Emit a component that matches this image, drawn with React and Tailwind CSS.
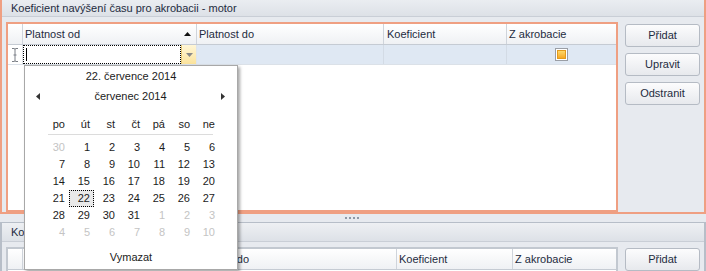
import React from "react";

const ORANGE = "border-[#ef9f82]";

function Btn({ children }) {
  return (
    <div className="h-[23px] rounded-[3px] border border-[#b5bbc4] bg-gradient-to-b from-[#fcfcfd] to-[#e7e9ed] flex items-center justify-center text-[#1e2b40]">
      {children}
    </div>
  );
}

function SortUp() {
  return (
    <svg width="7" height="4" viewBox="0 0 7 4" className="block">
      <path d="M0 4 L3.5 0 L7 4 Z" fill="#111" />
    </svg>
  );
}

function IBeam() {
  return (
    <svg width="8" height="14" viewBox="0 0 8 14" className="block">
      <path
        d="M1 0.5 H3 Q4 0.5 4 1.5 Q4 0.5 5 0.5 H7 M4 1.5 V12.5 M1 13.5 H3 Q4 13.5 4 12.5 Q4 13.5 5 13.5 H7 M2.5 7 H5.5"
        stroke="#7b7f86"
        strokeWidth="1"
        fill="none"
      />
    </svg>
  );
}

function Checkbox() {
  return (
    <div className="w-[13px] h-[13px] border border-[#9a9ea5] bg-white p-px">
      <div className="w-full h-full border border-[#e39a1c] bg-gradient-to-b from-[#fdd866] to-[#f6a81e]" />
    </div>
  );
}

function TopPanel() {
  return (
    <div className={`h-[214px] flex flex-col border-x-2 border-b-2 ${ORANGE} bg-[#e7eaef]`}>
      <div className="h-[17px] shrink-0 flex items-center pl-[9px] border-b border-[#c9ced6] bg-gradient-to-b from-[#eaedf1] to-[#dde1e7] text-[#1e2b40]">
        Koeficient navýšení času pro akrobacii - motor
      </div>
      <div className="flex pt-[5px] pl-[4px]">
        <div className={`w-[612px] h-[190px] border-2 ${ORANGE} bg-white flex flex-col`}>
          <div className="h-[21px] flex border-b border-[#c5cbd3] bg-gradient-to-b from-white to-[#eff1f4] text-[#1e2b40]">
            <div className="w-[15px] border-r border-[#cfd4db]" />
            <div className="w-[174px] border-r border-[#cfd4db] flex items-center pl-[2px] pr-[5px] justify-between">
              <span>Platnost od</span>
              <SortUp />
            </div>
            <div className="w-[187px] border-r border-[#cfd4db] flex items-center pl-[2px]">Platnost do</div>
            <div className="w-[123px] border-r border-[#cfd4db] flex items-center pl-[3px]">Koeficient</div>
            <div className="flex-1 flex items-center pl-[2px]">Z akrobacie</div>
          </div>
          <div className="h-[20px] flex border-b border-[#dbe1e8]">
            <div className="w-[15px] border-r border-[#e1e5ea] flex items-center justify-center bg-white">
              <IBeam />
            </div>
            <div className="w-[174px] border-r border-[#dfe4ea] flex bg-white">
              <div className="flex-1 border border-dotted border-black flex items-center pl-[2px]">
                <div className="w-px h-[13px] bg-black" />
              </div>
              <div className="w-[15px] border-l border-[#e6c873] bg-gradient-to-b from-[#fff6d6] to-[#fbe39c] flex items-center justify-center">
                <svg width="7" height="4" viewBox="0 0 7 4" className="block">
                  <path d="M0 0 L7 0 L3.5 4 Z" fill="#8a8a8a" />
                </svg>
              </div>
            </div>
            <div className="w-[187px] border-r border-[#d3dbe5] bg-[#dfe8f3]" />
            <div className="w-[123px] border-r border-[#d3dbe5] bg-[#dfe8f3]" />
            <div className="flex-1 bg-[#dfe8f3] flex items-center justify-center">
              <Checkbox />
            </div>
          </div>
        </div>
        <div className="ml-[7px] mt-[2px] w-[75px] flex flex-col gap-[6px]">
          <Btn>Přidat</Btn>
          <Btn>Upravit</Btn>
          <Btn>Odstranit</Btn>
        </div>
      </div>
    </div>
  );
}

function Splitter() {
  return (
    <div className="h-[8px] flex items-center justify-center gap-[2px] pr-[3px]">
      <div className="w-[2px] h-[2px] bg-[#8e98a6]" />
      <div className="w-[2px] h-[2px] bg-[#8e98a6]" />
      <div className="w-[2px] h-[2px] bg-[#8e98a6]" />
      <div className="w-[2px] h-[2px] bg-[#8e98a6]" />
    </div>
  );
}

function BottomPanel() {
  return (
    <div className="h-[60px] flex flex-col border-t border-x-2 border-[#b7bec8] bg-[#e7eaef]">
      <div className="h-[19px] shrink-0 flex items-center pl-[9px] border-b border-[#c9ced6] bg-gradient-to-b from-[#eef0f3] to-[#dde1e7] text-[#1e2b40]">
        Koeficient navýšení času
      </div>
      <div className="flex pt-[5px] pl-[4px]">
        <div className="w-[612px] h-[40px] border-2 border-[#c2c8d0] bg-white flex flex-col">
          <div className="h-[21px] flex border-b border-[#c5cbd3] bg-gradient-to-b from-white to-[#eff1f4] text-[#1e2b40]">
            <div className="w-[15px] border-r border-[#cfd4db]" />
            <div className="w-[169px] border-r border-[#cfd4db] flex items-center pl-[2px]">Platnost od</div>
            <div className="w-[205px] border-r border-[#cfd4db] flex items-center pl-[2px]">Platnost do</div>
            <div className="w-[116px] border-r border-[#cfd4db] flex items-center pl-[2px]">Koeficient</div>
            <div className="flex-1 flex items-center pl-[2px]">Z akrobacie</div>
          </div>
        </div>
        <div className="ml-[7px] mt-[1px] w-[75px] flex flex-col">
          <Btn>Přidat</Btn>
        </div>
      </div>
    </div>
  );
}

const HEAD = ["po", "út", "st", "čt", "pá", "so", "ne"];
const ROWS = [
  [[30, 1], [1], [2], [3], [4], [5], [6]],
  [[7], [8], [9], [10], [11], [12], [13]],
  [[14], [15], [16], [17], [18], [19], [20]],
  [[21], [22, 0, 1], [23], [24], [25], [26], [27]],
  [[28], [29], [30], [31], [1, 1], [2, 1], [3, 1]],
  [[4, 1], [5, 1], [6, 1], [7, 1], [8, 1], [9, 1], [10, 1]],
];

function Calendar() {
  return (
    <div className="absolute left-[24px] top-[65px] w-[214px] h-[205px] border border-[#a8a8a8] bg-white shadow-[2px_2px_3px_rgba(0,0,0,0.35)] flex flex-col items-center pt-[3px] text-[#1c1c1c]">
      <div className="h-[14px] leading-[14px]">22. července 2014</div>
      <div className="mt-[6px] h-[14px] w-full flex items-center justify-between pl-[11px] pr-[12px]">
        <svg width="4" height="7" viewBox="0 0 4 7" className="block">
          <path d="M4 0 L0 3.5 L4 7 Z" fill="#333" />
        </svg>
        <span className="leading-[14px]">červenec 2014</span>
        <svg width="4" height="7" viewBox="0 0 4 7" className="block">
          <path d="M0 0 L4 3.5 L0 7 Z" fill="#333" />
        </svg>
      </div>
      <div className="mt-[13px] ml-[19px] self-start w-[175px]">
        <div className="grid grid-cols-7 h-[17px]">
          {HEAD.map((h) => (
            <div key={h} className="text-right pr-[4px] leading-[17px]">
              {h}
            </div>
          ))}
        </div>
        <div className="mt-[1px] ml-[4px] mr-[6px] h-px bg-[#dcdcdc]" />
        <div className="mt-[4px] grid grid-cols-7">
          {ROWS.flat().map(([n, gray, sel], i) =>
            sel ? (
              <div
                key={i}
                className="h-[17px] leading-[15px] text-right pr-[3px] border border-dotted border-black bg-[#e9e9e9]"
              >
                {n}
              </div>
            ) : (
              <div
                key={i}
                className={`h-[17px] leading-[17px] text-right pr-[4px] ${gray ? "text-[#c4c4c4]" : ""}`}
              >
                {n}
              </div>
            )
          )}
        </div>
      </div>
      <div className="mt-[9px] h-[14px] leading-[14px]">Vymazat</div>
    </div>
  );
}

export default function App() {
  return (
    <div className="relative w-[706px] h-[271px] overflow-hidden bg-[#e7eaef] font-['Liberation_Sans',Arial,sans-serif] text-[11px]">
      <TopPanel />
      <Splitter />
      <BottomPanel />
      <Calendar />
    </div>
  );
}
